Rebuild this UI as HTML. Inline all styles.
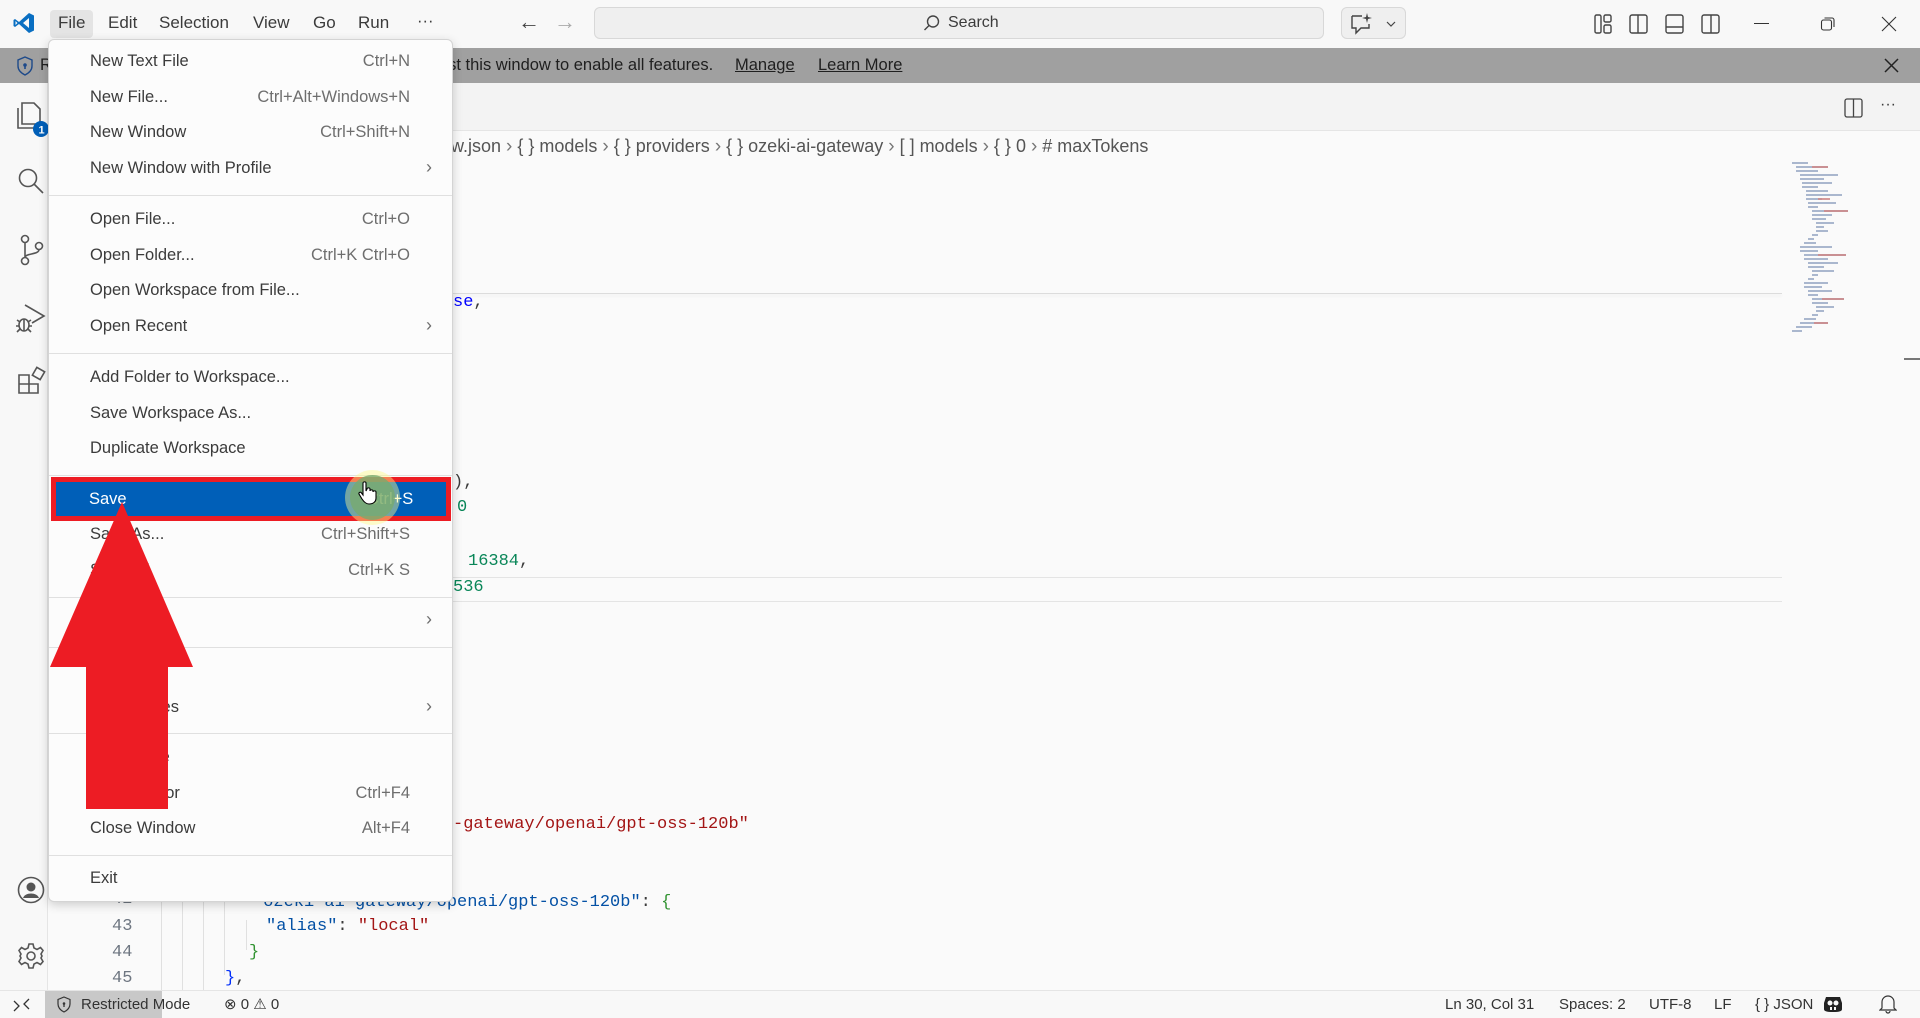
<!DOCTYPE html>
<html><head><meta charset="utf-8"><style>
*{margin:0;padding:0;box-sizing:border-box}
body{width:1920px;height:1018px;overflow:hidden;background:#fafafa;font-family:"Liberation Sans",sans-serif;color:#3b3b3b;position:relative}
.a{position:absolute;white-space:nowrap}
.mono{font-family:"Liberation Mono",monospace;font-size:17px}
.mi{position:absolute;left:41px;font-size:16.5px;color:#3b3b3b}
.sc{position:absolute;right:42px;font-size:16.5px;color:#6e6e6e}
.sep{position:absolute;left:0;right:0;height:1px;background:#e0e0e0}
.ic{position:absolute}
.bs{display:inline-block;margin:0 5px;font-size:19px;color:#777}
</style></head><body>
<!-- title bar -->
<div class="a" style="left:0;top:0;width:1920px;height:48px;background:#f8f8f8"></div>
<svg class="ic" style="left:12px;top:11px" width="24" height="24" viewBox="0 0 24 24"><path d="M17 2 L22 4.5 V19.5 L17 22 L7 13 L3 16 L1.5 15 V9 L3 8 L7 11 L17 2 Z M17 7 L11 12 L17 17 Z M3.5 10 V14 L5.5 12 Z" fill="#0a6fc2" fill-rule="evenodd"/></svg>
<div class="a" style="left:50px;top:10px;width:43px;height:28px;background:#e4e4e4;border-radius:4px"></div>
<div class="a" style="left:58px;top:13px;font-size:17px">File</div>
<div class="a" style="left:108px;top:13px;font-size:17px">Edit</div>
<div class="a" style="left:159px;top:13px;font-size:17px">Selection</div>
<div class="a" style="left:253px;top:13px;font-size:17px">View</div>
<div class="a" style="left:313px;top:13px;font-size:17px">Go</div>
<div class="a" style="left:358px;top:13px;font-size:17px">Run</div>
<div class="a" style="left:417px;top:12px;font-size:16.5px">···</div>
<div class="a" style="left:518px;top:9px;font-size:22px;color:#444">←</div>
<div class="a" style="left:554px;top:9px;font-size:22px;color:#aaa">→</div>
<div class="a" style="left:594px;top:7px;width:730px;height:32px;background:#efefef;border:1px solid #d8d8d8;border-radius:6px"></div>
<svg class="ic" style="left:923px;top:14px" width="18" height="18" viewBox="0 0 18 18"><circle cx="10" cy="7.5" r="5.5" fill="none" stroke="#444" stroke-width="1.4"/><path d="M6 11.5 L1.5 16" stroke="#444" stroke-width="1.4"/></svg>
<div class="a" style="left:948px;top:14px;font-size:16px">Search</div>
<div class="a" style="left:1341px;top:7px;width:65px;height:32px;background:#efefef;border:1px solid #d8d8d8;border-radius:6px"></div>
<svg class="ic" style="left:1349px;top:12px" width="50" height="24" viewBox="0 0 50 24"><path d="M3 4 H13 M3 4 V16 H7 V21 L12 16 H20 V12" fill="none" stroke="#444" stroke-width="1.4"/><path d="M18 1 L19 5 L23 6 L19 7 L18 11 L17 7 L13 6 L17 5 Z" fill="#444"/><path d="M38 10 L42 14 L46 10" fill="none" stroke="#444" stroke-width="1.2"/></svg>
<svg class="ic" style="left:1594px;top:13px" width="130" height="22" viewBox="0 0 130 22"><g fill="none" stroke="#444" stroke-width="1.4"><rect x="1" y="2" width="6" height="18" rx="1.5"/><rect x="10" y="2" width="7" height="7" rx="1.5"/><rect x="10" y="12" width="7" height="8" rx="1.5"/><rect x="36" y="2" width="17" height="18" rx="2"/><line x1="44" y1="2" x2="44" y2="20"/><rect x="72" y="2" width="17" height="18" rx="2"/><line x1="72" y1="14" x2="89" y2="14"/><rect x="108" y="2" width="17" height="18" rx="2"/><line x1="117" y1="2" x2="117" y2="20"/></g></svg>
<div class="a" style="left:1754px;top:23px;width:15px;height:1px;background:#333"></div>
<svg class="ic" style="left:1820px;top:16px" width="16" height="16" viewBox="0 0 16 16"><rect x="1.5" y="4" width="10" height="10" rx="2" fill="none" stroke="#333" stroke-width="1.1"/><path d="M4.5 2 H12 A2 2 0 0 1 14 4 V11" fill="none" stroke="#333" stroke-width="1.1"/></svg>
<svg class="ic" style="left:1881px;top:16px" width="16" height="16" viewBox="0 0 16 16"><path d="M1 1 L15 15 M15 1 L1 15" stroke="#333" stroke-width="1.1"/></svg>
<!-- banner -->
<div class="a" style="left:0;top:48px;width:1920px;height:35px;background:#a0a0a0"></div>
<svg class="ic" style="left:16px;top:56px" width="18" height="20" viewBox="0 0 18 20"><path d="M9 1 L16 4 V10 C16 14 13 17 9 19 C5 17 2 14 2 10 V4 Z" fill="none" stroke="#1e4a8a" stroke-width="1.4"/><circle cx="9" cy="9" r="1.8" fill="#1e4a8a"/><path d="M9 10 V13" stroke="#1e4a8a" stroke-width="1.6"/></svg>
<div class="a" style="left:40px;top:56px;font-size:16.5px;color:#1f1f1f">Restricted Mode is intended for safe code browsing. Trust this window to enable all features.</div>
<div class="a" style="left:735px;top:56px;font-size:16.5px;color:#1f1f1f;text-decoration:underline">Manage</div>
<div class="a" style="left:818px;top:56px;font-size:16.5px;color:#1f1f1f;text-decoration:underline">Learn More</div>
<svg class="ic" style="left:1884px;top:58px" width="15" height="15" viewBox="0 0 15 15"><path d="M1 1 L14 14 M14 1 L1 14" stroke="#222" stroke-width="1.5"/></svg>
<!-- activity bar -->
<div class="a" style="left:0;top:83px;width:48px;height:907px;background:#f8f8f8;border-right:1px solid #e5e5e5"></div>
<svg class="ic" style="left:14px;top:100px" width="34" height="40" viewBox="0 0 34 40"><g fill="none" stroke="#555" stroke-width="1.6"><path d="M8 3 H20 L26 9 V24 H8 Z"/><path d="M4 8 V28 H20"/></g><circle cx="27" cy="29" r="8" fill="#005fb8"/><text x="24.5" y="33.5" font-size="11" fill="#fff" font-family="Liberation Sans" font-weight="bold">1</text></svg>
<svg class="ic" style="left:16px;top:166px" width="30" height="30" viewBox="0 0 30 30"><circle cx="12" cy="12" r="8.5" fill="none" stroke="#555" stroke-width="1.6"/><path d="M18 18 L27 27" stroke="#555" stroke-width="1.6"/></svg>
<svg class="ic" style="left:18px;top:234px" width="28" height="32" viewBox="0 0 28 32"><g fill="none" stroke="#555" stroke-width="1.6"><circle cx="7" cy="5" r="3.5"/><circle cx="7" cy="27" r="3.5"/><circle cx="21" cy="12" r="3.5"/><path d="M7 8.5 V23.5 M21 15.5 C21 21 7 19 7 23.5"/></g></svg>
<svg class="ic" style="left:15px;top:302px" width="32" height="32" viewBox="0 0 32 32"><g fill="none" stroke="#555" stroke-width="1.6"><path d="M10 3 L29 14 L17 21"/><ellipse cx="9" cy="23" rx="5" ry="6"/><path d="M2 18 L5 20 M16 18 L13 20 M1 24 H4 M14 24 H17 M2 30 L5 27 M16 30 L13 27 M9 17 V29"/></g></svg>
<svg class="ic" style="left:17px;top:366px" width="30" height="30" viewBox="0 0 30 30"><g fill="none" stroke="#555" stroke-width="1.6"><path d="M2 9 H12 V27 H2 Z M2 18 H21 V27 H12"/><rect x="17" y="3" width="9" height="9" transform="rotate(30 21.5 7.5)"/></g></svg>
<svg class="ic" style="left:17px;top:876px" width="28" height="28" viewBox="0 0 28 28"><circle cx="14" cy="14" r="12.5" fill="none" stroke="#555" stroke-width="1.6"/><circle cx="14" cy="11" r="4.5" fill="#555"/><path d="M6 22 C8 16 20 16 22 22 Z" fill="#555"/></svg>
<svg class="ic" style="left:17px;top:942px" width="28" height="28" viewBox="0 0 28 28"><g fill="none" stroke="#555" stroke-width="1.6"><path d="M12 2 H16 L17 6 L20 7.5 L23.5 5.5 L26 8.5 L24 12 L25 14 L24 16 L26 19.5 L23.5 22.5 L20 20.5 L17 22 L16 26 H12 L11 22 L8 20.5 L4.5 22.5 L2 19.5 L4 16 L3 14 L4 12 L2 8.5 L4.5 5.5 L8 7.5 L11 6 Z"/><circle cx="14" cy="14" r="4"/></g></svg>
<!-- tab bar / breadcrumb -->
<div class="a" style="left:49px;top:83px;width:1871px;height:48px;background:#f3f3f3;border-bottom:1px solid #e5e5e5"></div>
<svg class="ic" style="left:1844px;top:98px" width="20" height="20" viewBox="0 0 20 20"><rect x="1" y="1" width="17" height="18" rx="2" fill="none" stroke="#444" stroke-width="1.3"/><line x1="9.5" y1="1" x2="9.5" y2="19" stroke="#444" stroke-width="1.3"/></svg>
<div class="a" style="left:1880px;top:96px;font-size:16px">···</div>
<div class="a" style="left:451px;top:136px;font-size:18px;color:#555">w.json<span class="bs">›</span>{ } models<span class="bs">›</span>{ } providers<span class="bs">›</span>{ } ozeki-ai-gateway<span class="bs">›</span>[ ] models<span class="bs">›</span>{ } 0<span class="bs">›</span># maxTokens</div>
<!-- editor -->
<div class="a" style="left:453px;top:293px;width:1329px;height:1px;background:#dcdcdc;box-shadow:0 2px 3px rgba(0,0,0,.08)"></div>
<div class="a" style="left:453px;top:577px;width:1329px;height:25px;border-top:1px solid #e4e4e4;border-bottom:1px solid #e4e4e4"></div>
<div class="a mono" style="left:453px;top:293px;color:#0000ff">se<span style="color:#3b3b3b">,</span></div>
<div class="a mono" style="left:453px;top:473px;color:#3b3b3b">),</div>
<div class="a mono" style="left:457px;top:498px;color:#098658">0</div>
<div class="a mono" style="left:468px;top:552px;color:#098658">16384<span style="color:#3b3b3b">,</span></div>
<div class="a mono" style="left:453px;top:578px;color:#098658">536</div>
<div class="a mono" style="left:453px;top:815px;color:#a31515">-gateway/openai/gpt-oss-120b"</div>
<div class="a" style="left:161px;top:895px;width:1px;height:95px;background:#e0e0e0"></div>
<div class="a" style="left:182px;top:895px;width:1px;height:95px;background:#e0e0e0"></div>
<div class="a" style="left:203px;top:895px;width:1px;height:95px;background:#e0e0e0"></div>
<div class="a" style="left:224px;top:895px;width:1px;height:80px;background:#e0e0e0"></div>
<div class="a" style="left:246px;top:920px;width:1px;height:30px;background:#e0e0e0"></div>
<div class="a mono" style="left:112px;top:890px;color:#6e7681">42</div>
<div class="a mono" style="left:112px;top:917px;color:#6e7681">43</div>
<div class="a mono" style="left:112px;top:943px;color:#6e7681">44</div>
<div class="a mono" style="left:112px;top:969px;color:#6e7681">45</div>
<div class="a mono" style="left:253px;top:893px;color:#0451a5">"ozeki-ai-gateway/openai/gpt-oss-120b"<span style="color:#3b3b3b">: </span><span style="color:#319331">{</span></div>
<div class="a mono" style="left:266px;top:917px;color:#0451a5">"alias"<span style="color:#3b3b3b">: </span><span style="color:#a31515">"local"</span></div>
<div class="a mono" style="left:249px;top:943px;color:#319331">}</div>
<div class="a mono" style="left:225px;top:969px;color:#0431fa">}<span style="color:#3b3b3b">,</span></div>
<!-- minimap -->
<svg class="ic" style="left:1788px;top:159px" width="100" height="185" viewBox="0 0 100 185"><g stroke-width="1.2">
<path d="M4 4 H20 M8 8 H40 M8 12 H30 M12 16 H50 M12 20 H36 M14 24 H44 M14 28 H30 M18 32 H40 M18 36 H54 M18 40 H34 M20 44 H48 M20 48 H30 M24 52 H60 M24 56 H44 M24 60 H38 M28 64 H46 M28 68 H36 M28 72 H40 M24 76 H30 M20 80 H26 M16 84 H28 M12 88 H44 M12 92 H30 M16 96 H58 M16 100 H40 M20 104 H50 M20 108 H36 M24 112 H46 M24 116 H30 M20 120 H26 M16 124 H40 M16 128 H34 M20 132 H44 M20 136 H30 M24 140 H56 M24 144 H40 M28 148 H46 M28 152 H36 M24 156 H30 M16 160 H28 M12 164 H40 M8 168 H24 M4 172 H14" stroke="#7a8fb5"/>
<path d="M24 8 H40 M30 40 H42 M36 52 H60 M30 96 H58 M34 140 H56 M26 164 H40" stroke="#c06060"/></g></svg>
<div class="a" style="left:1904px;top:358px;width:16px;height:2px;background:#777"></div>
<!-- status bar -->
<div class="a" style="left:0;top:990px;width:1920px;height:28px;background:#f8f8f8;border-top:1px solid #e5e5e5"></div>
<svg class="ic" style="left:12px;top:996px" width="20" height="18" viewBox="0 0 20 18"><path d="M2 5 L7 10 L2 15 M17 3 L12 8 L17 13" fill="none" stroke="#333" stroke-width="1.3"/></svg>
<div class="a" style="left:45px;top:991px;width:117px;height:27px;background:#c8c8c8"></div>
<svg class="ic" style="left:57px;top:996px" width="14" height="17" viewBox="0 0 14 17"><path d="M7 1 L13 3.5 V8 C13 12 10 14.5 7 16 C4 14.5 1 12 1 8 V3.5 Z" fill="none" stroke="#333" stroke-width="1.2"/><circle cx="7" cy="7.5" r="1.3" fill="#333"/><path d="M7 8 V11" stroke="#333" stroke-width="1.3"/></svg>
<div class="a" style="left:81px;top:996px;font-size:15px;color:#333">Restricted Mode</div>
<div class="a" style="left:224px;top:995px;font-size:15px;color:#333">&#x2297; 0 &#x26A0; 0</div>
<div class="a" style="left:1445px;top:996px;font-size:15px;color:#333">Ln 30, Col 31</div>
<div class="a" style="left:1559px;top:996px;font-size:15px;color:#333">Spaces: 2</div>
<div class="a" style="left:1649px;top:996px;font-size:15px;color:#333">UTF-8</div>
<div class="a" style="left:1714px;top:996px;font-size:15px;color:#333">LF</div>
<div class="a" style="left:1755px;top:996px;font-size:15px;color:#333">{ } JSON</div>
<svg class="ic" style="left:1823px;top:995px" width="20" height="18" viewBox="0 0 20 18"><path d="M3 2 H17 L19 8 V14 C19 16 17 17 10 17 C3 17 1 16 1 14 V8 Z" fill="#222"/><circle cx="7" cy="8" r="2.5" fill="#f8f8f8"/><circle cx="13" cy="8" r="2.5" fill="#f8f8f8"/><rect x="7" y="12" width="2" height="3" fill="#f8f8f8"/><rect x="11" y="12" width="2" height="3" fill="#f8f8f8"/></svg>
<svg class="ic" style="left:1879px;top:994px" width="18" height="20" viewBox="0 0 18 20"><path d="M3 14 V8 A6 6 0 0 1 15 8 V14 L17 16 H1 Z M7 17 A2 2 0 0 0 11 17" fill="none" stroke="#333" stroke-width="1.2"/></svg>
<!-- menu -->
<div class="a" style="left:48px;top:39px;width:405px;height:863px;background:#fcfcfc;border:1px solid #d4d4d4;border-radius:6px;box-shadow:0 3px 10px rgba(0,0,0,.18)">
<div class="mi" style="top:12px">New Text File</div><div class="sc" style="top:12px">Ctrl+N</div>
<div class="mi" style="top:48px">New File...</div><div class="sc" style="top:48px">Ctrl+Alt+Windows+N</div>
<div class="mi" style="top:83px">New Window</div><div class="sc" style="top:83px">Ctrl+Shift+N</div>
<div class="mi" style="top:119px">New Window with Profile</div><div class="sc" style="top:117px;right:20px;font-size:18px">&#x203A;</div>
<div class="sep" style="top:155px"></div>
<div class="mi" style="top:170px">Open File...</div><div class="sc" style="top:170px">Ctrl+O</div>
<div class="mi" style="top:206px">Open Folder...</div><div class="sc" style="top:206px">Ctrl+K Ctrl+O</div>
<div class="mi" style="top:241px">Open Workspace from File...</div>
<div class="mi" style="top:277px">Open Recent</div><div class="sc" style="top:275px;right:20px;font-size:18px">&#x203A;</div>
<div class="sep" style="top:313px"></div>
<div class="mi" style="top:328px">Add Folder to Workspace...</div>
<div class="mi" style="top:364px">Save Workspace As...</div>
<div class="mi" style="top:399px">Duplicate Workspace</div>
<div class="sep" style="top:435px"></div>
<div class="mi" style="top:485px">Save As...</div><div class="sc" style="top:485px">Ctrl+Shift+S</div>
<div class="mi" style="top:521px">Save All</div><div class="sc" style="top:521px">Ctrl+K S</div>
<div class="sep" style="top:557px"></div>
<div class="mi" style="top:571px">Share</div><div class="sc" style="top:569px;right:20px;font-size:18px">&#x203A;</div>
<div class="sep" style="top:607px"></div>
<div class="mi" style="top:622px">Auto Save</div>
<div class="mi" style="top:658px">Preferences</div><div class="sc" style="top:656px;right:20px;font-size:18px">&#x203A;</div>
<div class="sep" style="top:693px"></div>
<div class="mi" style="top:708px">Revert File</div>
<div class="mi" style="top:744px">Close Editor</div><div class="sc" style="top:744px">Ctrl+F4</div>
<div class="mi" style="top:779px">Close Window</div><div class="sc" style="top:779px">Alt+F4</div>
<div class="sep" style="top:815px"></div>
<div class="mi" style="top:829px">Exit</div>
</div>
<!-- Save highlight -->
<div class="a" style="left:51px;top:477px;width:400px;height:44px;background:#ed1c24"></div>
<div class="a" style="left:56px;top:482px;width:390px;height:34px;background:#005fb8"></div>
<div class="a" style="left:89px;top:490px;font-size:16.5px;color:#fff">Save</div>
<div class="a" style="left:367px;top:490px;font-size:16.5px;color:#fff">Ctrl+S</div>
<div class="a" style="left:345px;top:470px;width:55px;height:55px;border-radius:50%;background:rgba(255,250,140,.45)"></div>
<div class="a" style="left:350px;top:475px;width:45px;height:45px;border-radius:50%;background:rgba(120,170,110,.8)"></div>
<svg class="ic" style="left:358px;top:481px" width="20" height="24" viewBox="0 0 20 24"><path d="M5 2 C5 0.5 8 0.5 8 2 V10 L9 8 C9 6.5 12 6.5 12 8 V10 C12 8.5 15 8.5 15 10 V11 C15 9.5 18 9.5 18 11 V17 C18 21 15 23 11 23 C8 23 6 21 4 18 L1 13 C0.5 11.5 2.5 10.5 3.5 12 L5 14 Z" fill="#fff" stroke="#000" stroke-width="1.1"/></svg>
<!-- arrow -->
<svg class="ic" style="left:0;top:0" width="300" height="1018" viewBox="0 0 300 1018"><path d="M122 502 L193 667 L168 667 L168 809 L86 809 L86 667 L50 667 Z" fill="#ed1c24"/></svg>
</body></html>
